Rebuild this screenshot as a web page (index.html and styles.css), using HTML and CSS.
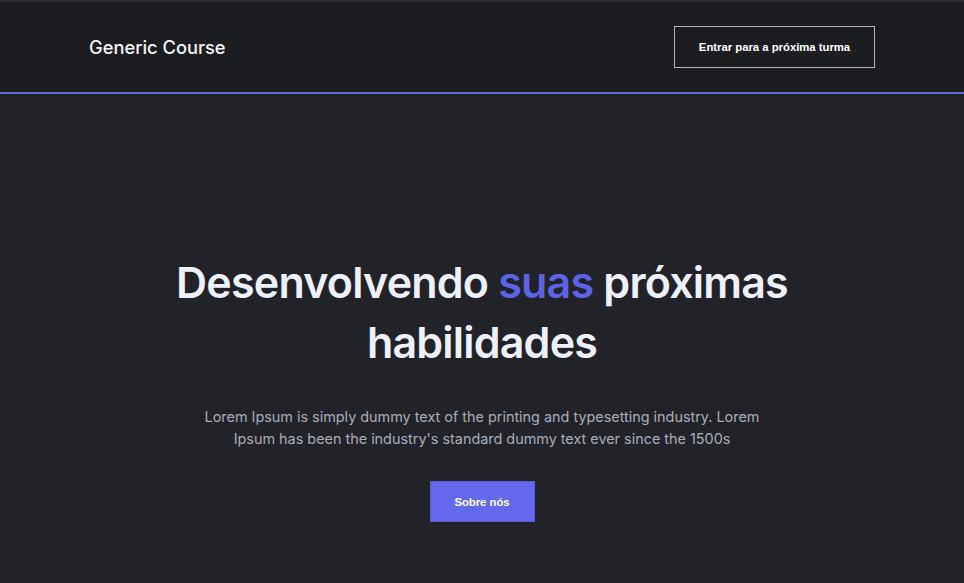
FILE: index.html
```html
<!DOCTYPE html>
<html lang="pt-BR">
<head>
<meta charset="utf-8">
<title>Generic Course</title>
<link rel="stylesheet" href="styles.css">
</head>
<body>
<header class="header">
  <div class="header-inner">
    <span class="logo">Generic Course</span>
    <button class="btn-outline">Entrar para a próxima turma</button>
  </div>
</header>
<main class="hero">
  <h1 class="hero-title">Desenvolvendo <span class="accent">suas</span> próximas habilidades</h1>
  <p class="hero-text">Lorem Ipsum is simply dummy text of the printing and typesetting industry. Lorem Ipsum has been the industry's standard dummy text ever since the 1500s</p>
  <button class="btn-primary">Sobre nós</button>
</main>
</body>
</html>
```

FILE: styles.css
```css
* { box-sizing: border-box; }
html, body { margin: 0; padding: 0; }
body {
  background: #212329;
  font-family: Inter, "Noto Sans", sans-serif;
  min-height: 583px;
  border-top: 2px solid #2e2f33;
}
.header {
  background: #1c1d21;
  border-bottom: 2px solid #5f66d8;
  height: 92px;
}
.header-inner {
  height: 100%;
  padding: 0 89px;
  display: flex;
  align-items: center;
  justify-content: space-between;
}
.logo {
  color: #f4f4f6;
  font-size: 18.3px;
  font-weight: 500;
}
.btn-outline {
  background: transparent;
  border: 1px solid #b4b4b8;
  color: #ffffff;
  font-family: "Liberation Sans", Arial, sans-serif;
  font-weight: 700;
  font-size: 11.3px;
  width: 201px;
  height: 42px;
}
.hero {
  display: flex;
  flex-direction: column;
  align-items: center;
  padding-top: 158px;
  text-align: center;
}
.hero-title {
  margin: 0;
  max-width: 680px;
  color: #eef0fb;
  font-size: 43px;
  font-weight: 600;
  line-height: 60px;
  letter-spacing: -0.8px;
}
.accent { color: #5d63e6; }
.hero-text {
  margin: 34px 0 0;
  max-width: 570px;
  color: #a9adb8;
  font-size: 14.4px;
  line-height: 22px;
}
.btn-primary {
  margin-top: 31px;
  width: 105px;
  height: 41px;
  background: #6368ec;
  border: 1px solid #5a5fd8;
  color: #ffffff;
  font-family: "Liberation Sans", Arial, sans-serif;
  font-weight: 700;
  font-size: 11.3px;
}
```
